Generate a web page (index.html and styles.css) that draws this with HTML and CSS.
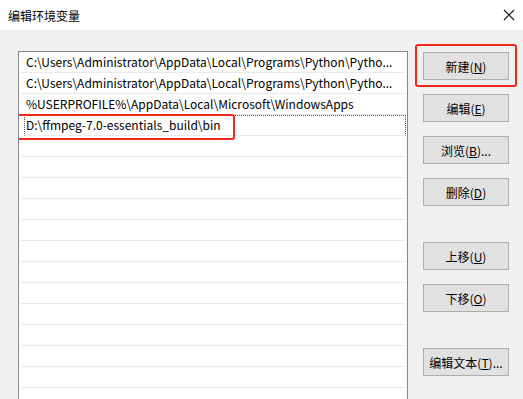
FILE: index.html
```html
<!DOCTYPE html>
<html lang="zh-CN">
<head>
    <meta charset="UTF-8">
    <meta name="viewport" content="width=device-width, initial-scale=1.0">
    <title>编辑环境变量</title>
    <link rel="stylesheet" href="styles.css">
</head>
<body>

    <div class="titlebar">
        <span class="title">编辑环境变量</span>
        <svg class="close" width="12" height="12" viewBox="0 0 12 12">
            <path d="M1 1 L11 11 M11 1 L1 11" stroke="#111" stroke-width="1.1" fill="none"/>
        </svg>
    </div>

    <div class="dialog">
        <div class="list">
            <div class="row">C:\Users\Administrator\AppData\Local\Programs\Python\Pytho...</div>
            <div class="row">C:\Users\Administrator\AppData\Local\Programs\Python\Pytho...</div>
            <div class="row">%USERPROFILE%\AppData\Local\Microsoft\WindowsApps</div>
            <div class="row selected marked">D:\ffmpeg-7.0-essentials_build\bin</div>
            <div class="row"></div>
            <div class="row"></div>
            <div class="row"></div>
            <div class="row"></div>
            <div class="row"></div>
            <div class="row"></div>
            <div class="row"></div>
            <div class="row"></div>
            <div class="row"></div>
            <div class="row"></div>
            <div class="row"></div>
            <div class="row"></div>
            <div class="row"></div>
        </div>

        <div class="buttons">
            <div class="btn-wrap marked"><button class="btn">新建(<u>N</u>)</button></div>
            <button class="btn">编辑(<u>E</u>)</button>
            <button class="btn">浏览(<u>B</u>)...</button>
            <button class="btn">删除(<u>D</u>)</button>
            <button class="btn spaced">上移(<u>U</u>)</button>
            <button class="btn">下移(<u>O</u>)</button>
            <button class="btn spaced">编辑文本(<u>T</u>)...</button>
        </div>
    </div>

</body>
</html>
```

FILE: styles.css
```css
body {
    margin: 0;
    padding: 0;
    height: 399px;
    overflow: hidden;
    background: #f0f0f0;
    font-family: "Noto Sans CJK SC", "Liberation Sans", sans-serif;
    font-size: 12px;
    color: #000;
}

/* 标题栏 */
.titlebar {
    height: 30px;
    background: #fff;
    display: flex;
    align-items: center;
    justify-content: space-between;
    padding: 0 8px 0 8px;
}

.title {
    font-size: 12px;
}

.dialog {
    display: flex;
    padding: 21px 0 0 18px;
}

/* 路径列表 */
.list {
    width: 390px;
    height: 348px;
    border: 1px solid #828790;
    border-bottom: none;
    background: #fff;
    padding: 0 1px;
    box-sizing: border-box;
    overflow: hidden;
}

.row {
    height: 21px;
    line-height: 20px;
    border-bottom: 1px solid #ebebeb;
    box-sizing: border-box;
    padding-left: 6px;
    white-space: nowrap;
    overflow: hidden;
}

.row.selected {
    margin-left: 4px;
    padding-left: 1px;
    line-height: 18px;
    border-top: 1px dotted #555;
    border-left: 1px dotted #555;
    border-right: 1px dotted #555;
    border-bottom: 1px solid #ebebeb;
}

/* 红色标注框 */
.marked {
    position: relative;
}

.row.marked::after {
    content: "";
    position: absolute;
    left: -9px;
    top: -2px;
    width: 215px;
    height: 22px;
    border: 2px solid #f5261b;
    border-radius: 3px;
}

.row.selected.marked {
    overflow: visible;
}

/* 按钮 */
.buttons {
    display: flex;
    flex-direction: column;
    gap: 14px;
    margin-left: 15px;
    padding-top: 1px;
}

.btn {
    width: 86px;
    height: 28px;
    padding: 0;
    background: #e1e1e1;
    border: 1px solid #adadad;
    font-family: inherit;
    font-size: 12px;
    color: #000;
}

.btn.spaced {
    margin-top: 22px;
}

.btn-wrap.marked::after {
    content: "";
    position: absolute;
    left: -8px;
    top: -8px;
    width: 98px;
    height: 39px;
    border: 2px solid #f5261b;
    border-radius: 3px;
}
```
